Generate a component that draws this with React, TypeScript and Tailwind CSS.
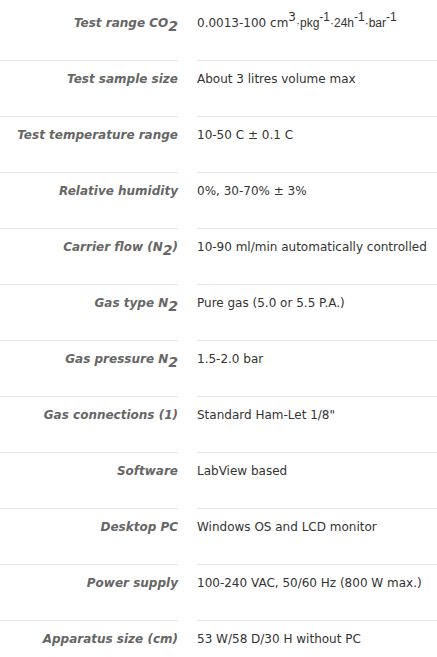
const Sub = ({ children }: { children: React.ReactNode }) => (
  <sub className="text-[14px] leading-none">{children}</sub>
)

const Sup = ({ children }: { children: React.ReactNode }) => (
  <sup className="text-[12px] leading-none">{children}</sup>
)

const rows: { label: React.ReactNode; value: React.ReactNode }[] = [
  {
    label: (
      <>
        Test range CO<Sub>2</Sub>
      </>
    ),
    value: (
      <>
        0.0013-100 cm<Sup>3</Sup>
        <span className="font-['Liberation_Sans',sans-serif] text-[12px]">
          ·pkg<Sup>-1</Sup>·24h<Sup>-1</Sup>·bar<Sup>-1</Sup>
        </span>
      </>
    ),
  },
  { label: 'Test sample size', value: 'About 3 litres volume max' },
  { label: 'Test temperature range', value: '10-50 C ± 0.1 C' },
  { label: 'Relative humidity', value: '0%, 30-70% ± 3%' },
  {
    label: (
      <>
        Carrier flow (N<Sub>2</Sub>)
      </>
    ),
    value: '10-90 ml/min automatically controlled',
  },
  {
    label: (
      <>
        Gas type N<Sub>2</Sub>
      </>
    ),
    value: 'Pure gas (5.0 or 5.5 P.A.)',
  },
  {
    label: (
      <>
        Gas pressure N<Sub>2</Sub>
      </>
    ),
    value: '1.5-2.0 bar',
  },
  { label: 'Gas connections (1)', value: 'Standard Ham-Let 1/8"' },
  { label: 'Software', value: 'LabView based' },
  { label: 'Desktop PC', value: 'Windows OS and LCD monitor' },
  { label: 'Power supply', value: '100-240 VAC, 50/60 Hz (800 W max.)' },
  { label: 'Apparatus size (cm)', value: '53 W/58 D/30 H without PC' },
]

export default function App() {
  return (
    <div className="min-h-[657px] bg-white pt-[4px] font-['DejaVu_Sans',Verdana,sans-serif]">
      {rows.map((row, i) => (
        <div key={i} className="flex h-[56px] gap-[19px]">
          <div
            className={`w-[178px] shrink-0 whitespace-nowrap border-t pt-[10px] text-right text-[12px] font-bold italic leading-[16px] text-[#666666] ${
              i === 0 ? 'border-transparent' : 'border-[#e8e8e8]'
            }`}
          >
            {row.label}
          </div>
          <div
            className={`flex-1 whitespace-nowrap border-t pt-[10px] text-[12px] leading-[16px] text-[#333333] ${
              i === 0 ? 'border-transparent' : 'border-[#e8e8e8]'
            }`}
          >
            {row.value}
          </div>
        </div>
      ))}
    </div>
  )
}
